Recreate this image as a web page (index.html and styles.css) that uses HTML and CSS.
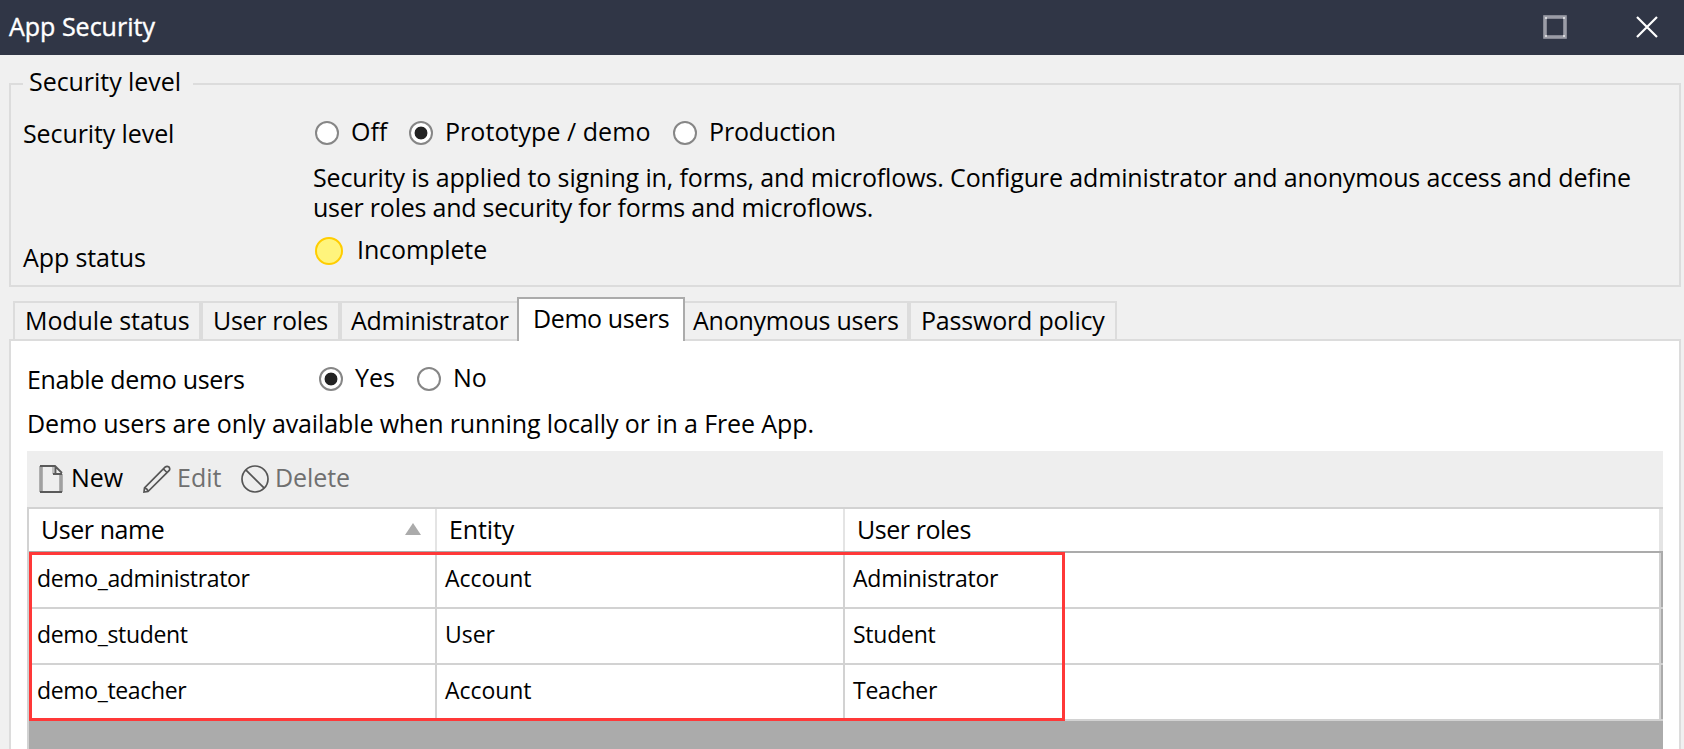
FILE: index.html
```html
<!DOCTYPE html>
<html lang="en">
<head>
<meta charset="utf-8">
<title>App Security</title>
<link rel="stylesheet" href="styles.css">
</head>
<body>
<header class="titlebar">
  <h1 class="title">App Security</h1>
  <svg class="win-max" width="24" height="24" viewBox="0 0 24 24"><rect x="2" y="2" width="20" height="20" fill="none" stroke="#9a9ca6" stroke-width="3.600"/><path d="M2 2h2v2H2zM20 2h2v2h-2zM2 20h2v2H2zM20 20h2v2h-2z" fill="#d6d7db"/></svg>
  <svg class="win-close" width="24" height="24" viewBox="0 0 24 24"><path d="M2 2L22 22M22 2L2 22" fill="none" stroke="#fff" stroke-width="2.2"/></svg>
</header>

<fieldset class="group">
  <legend class="legend">Security level</legend>
  <div class="level-row">
    <span class="label level-label">Security level</span>
    <div class="radios">
      <span class="radio"></span><span class="opt off">Off</span>
      <span class="radio on"></span><span class="opt proto">Prototype / demo</span>
      <span class="radio"></span><span class="opt prod">Production</span>
    </div>
  </div>
  <p class="desc"><span class="desc-a">Security is applied to signing in, forms, and microflows. Configure administrator and anonymous access and define</span><br><span class="desc-b">user roles and security for forms and microflows.</span></p>
  <div class="status-row">
    <span class="label status-label">App status</span>
    <svg class="dot" width="28" height="28" viewBox="0 0 28 28"><circle cx="14" cy="14" r="13" fill="#fff47c" stroke="#ffcd00" stroke-width="2"/></svg>
    <span class="status">Incomplete</span>
  </div>
</fieldset>

<nav class="tabs">
  <span class="tab t1">Module status</span>
  <span class="tab t2">User roles</span>
  <span class="tab t3">Administrator</span>
  <span class="tab active">Demo users</span>
  <span class="tab t5">Anonymous users</span>
  <span class="tab t6">Password policy</span>
</nav>

<main class="panel">
  <div class="enable-row">
    <span class="label enable-label">Enable demo users</span>
    <div class="radios">
      <span class="radio on"></span><span class="opt yes">Yes</span>
      <span class="radio"></span><span class="opt">No</span>
    </div>
  </div>
  <p class="hint">Demo users are only available when running locally or in a Free App.</p>
  <div class="toolbar">
    <svg class="ico" width="24" height="28" viewBox="0 0 24 28"><path d="M2 1V27M22 9V27" stroke="#a0a0a0" stroke-width="3.600" fill="none"/><path d="M13 2h4v7h-4z" fill="#c0c0c0"/><path d="M1 1H16L23 8M1 27H23M14 9H23M16.500 2V9" stroke="#5a5a5a" stroke-width="1.800" fill="none"/></svg>
    <span class="cmd new">New</span>
    <svg class="ico" width="28" height="28" viewBox="0 0 28 28"><path d="M1 27L1.500 23L22.300 2Q24 0.600 26 2Q27.400 4 26 5.700L5 26.500ZM1.500 23Q4.500 23.500 5 26.500M20.500 4L24 7.500" stroke="#555" stroke-width="1.700" fill="none"/></svg>
    <span class="cmd edit">Edit</span>
    <svg class="ico" width="28" height="28" viewBox="0 0 28 28"><path d="M4.800 4.800L23.200 23.200" stroke="#555" stroke-width="1.700"/><circle cx="14" cy="14" r="13" stroke="#555" stroke-width="1.700" fill="none"/></svg>
    <span class="cmd delete">Delete</span>
  </div>
  <div class="grid">
    <div class="row head">
      <span class="cell c1">User name<svg width="16" height="12" viewBox="0 0 16 12"><path d="M8 0L16 12H0z" fill="#ababab"/></svg></span>
      <span class="cell c2">Entity</span>
      <span class="cell c3">User roles</span>
    </div>
    <div class="row"><span class="cell c1">demo_administrator</span><span class="cell c2">Account</span><span class="cell c3">Administrator</span></div>
    <div class="row"><span class="cell c1">demo_student</span><span class="cell c2">User</span><span class="cell c3">Student</span></div>
    <div class="row"><span class="cell c1">demo_teacher</span><span class="cell c2">Account</span><span class="cell c3">Teacher</span></div>
    <div class="highlight"></div>
  </div>
</main>
</body>
</html>
```
FILE: styles.css
```css
* { box-sizing: border-box; }
body {
  margin: 0;
  width: 1684px;
  height: 749px;
  overflow: hidden;
  display: flex;
  flex-direction: column;
  background: #f0f0f0;
  color: #000;
  font: 25px/34px "Open Sans", "Noto Sans", sans-serif;
  white-space: nowrap;
}
svg { display: block; flex: none; }
p, h1 { margin: 0; font-size: inherit; font-weight: inherit; }

.titlebar {
  height: 55px;
  flex: none;
  display: flex;
  align-items: flex-start;
  padding: 8px 25px 0 9px;
  background: #303646;
  color: #fff;
}
.title { margin: 1px auto 0 0; -webkit-text-stroke: 0.4px #fff; }
.win-max { margin: 7px 68px 0 0; }
.win-close { margin-top: 7px; }

.group {
  margin: 9px 3px 0 9px;
  padding: 0 0 0 12px;
  height: 223px;
  flex: none;
  border: 2px solid #dcdcdc;
}
.legend { width: 170px; height: 40px; padding: 0 0 6px 6px; letter-spacing: -0.05px; }
.level-row { display: flex; height: 58px; padding-top: 10px; }
.level-label { width: 292px; padding-top: 2px; letter-spacing: -0.1px; }
.radios { display: flex; }
.radio {
  width: 24px;
  height: 24px;
  margin-top: 7px;
  flex: none;
  border: 2px solid #868686;
  border-radius: 50%;
  background: #fff;
}
.radio.on { background: radial-gradient(circle, #222 6px, #fff 6.8px); }
.opt { margin-left: 12px; }
.opt.off { width: 58px; }
.opt.proto { width: 228px; letter-spacing: 0.05px; }
.opt.prod { letter-spacing: -0.15px; }
.desc { margin-left: 290px; line-height: 30px; height: 70px; }
.desc-a { letter-spacing: -0.13px; }
.desc-b { letter-spacing: -0.23px; }
.status-row { display: flex; }
.status-label { width: 292px; padding-top: 8px; letter-spacing: -0.1px; }
.dot { margin-top: 5px; }
.status { margin-left: 14px; letter-spacing: -0.1px; }

.tabs {
  position: relative;
  z-index: 1;
  display: flex;
  align-items: flex-end;
  height: 54px;
  margin: 0 0 -2px 13px;
  flex: none;
}
.tab {
  height: 40px;
  border: 2px solid #dcdcdc;
  line-height: 34px;
}
.t1 { width: 188px; padding-left: 10px; letter-spacing: -0.1px; }
.t2 { width: 139px; padding-left: 10px; letter-spacing: -0.35px; }
.t3 { width: 177px; padding-left: 9px; letter-spacing: -0.28px; border-right: 0; }
.active {
  width: 168px;
  height: 44px;
  padding: 2px 0 0 14px;
  letter-spacing: -0.4px;
  border-color: #ababab;
  border-bottom: 0;
  background: #fff;
}
.t5 { width: 224px; padding-left: 8px; letter-spacing: -0.25px; border-left: 0; }
.t6 { width: 208px; padding-left: 10px; letter-spacing: -0.2px; }

.panel {
  margin: 0 3px 0 9px;
  padding: 19px 16px 0;
  flex: 1;
  border: 2px solid #dcdcdc;
  border-bottom: 0;
  background: #fff;
}
.enable-row { display: flex; height: 46px; }
.enable-label { width: 292px; padding-top: 2px; letter-spacing: -0.3px; }
.opt.yes { width: 62px; }
.hint { height: 45px; letter-spacing: -0.11px; }
.toolbar { height: 56px; display: flex; padding: 9px 0 0 12px; background: #eee; }
.ico { margin-top: 5px; }
.cmd { color: #707070; }
.cmd.new { width: 72px; margin-left: 8px; color: #000; }
.cmd.edit { width: 64px; margin-left: 6px; }
.cmd.delete { margin-left: 6px; letter-spacing: -0.1px; }

.grid {
  position: relative;
  height: 242px;
  border-top: 2px solid #d2d2d2;
  border-left: 2px solid #d2d2d2;
  background: #ababab;
}
.row {
  display: flex;
  height: 56px;
  border-bottom: 2px solid #d2d2d2;
  font-size: 23px;
  letter-spacing: -0.35px;
  line-height: 32px;
}
.cell {
  padding: 9px 0 0 8px;
  background: #fff;
  border-right: 2px solid #d2d2d2;
}
.c1 { width: 408px; }
.c2 { width: 408px; letter-spacing: -0.05px; }
.c3 { width: 816px; letter-spacing: -0.24px; }
.head {
  height: 44px;
  font-size: 25px;
  line-height: 34px;
  border-color: #ababab;
}
.head .cell { padding: 3px 0 0 12px; border-color: #e4e4e4; letter-spacing: -0.45px; }
.head .c1 { display: flex; justify-content: space-between; padding-right: 14px; }
.head svg { margin-top: 11px; }
.head .c2 { letter-spacing: -0.1px; }
.head .c3 { width: 818px; border-right-width: 4px; }

/* Red frame drawn over the demo user rows */
.highlight {
  position: absolute;
  left: 0;
  top: 43px;
  width: 1036px;
  height: 169px;
  border: 3px solid #ff3838;
}
```
